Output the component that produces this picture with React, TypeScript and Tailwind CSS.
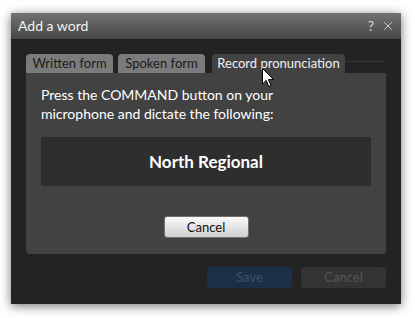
import { X } from 'lucide-react';

export default function App() {
  return (
    <div className="relative w-[415px] h-[318px] bg-white pt-[13px] pl-[11px] font-['Lato',sans-serif]">
      <div className="w-[390px] h-[291px] flex flex-col bg-[#232323] shadow-[0_2px_10px_rgba(0,0,0,0.55)]">
        {/* title bar */}
        <div className="h-[26px] flex items-center justify-between pl-[7px] pr-[6px] bg-gradient-to-b from-[#727272] to-[#474747]">
          <span className="text-[14px] text-[#f2f2f2] leading-none">Add a word</span>
          <div className="flex items-center gap-[7px] text-[#d8d8d8]">
            <span className="text-[14px] leading-none">?</span>
            <X className="w-[14px] h-[14px]" strokeWidth={1.5} />
          </div>
        </div>

        <div className="flex-1 flex flex-col px-[15px] pt-[15px]">
          {/* tabs */}
          <div className="h-[19px] flex items-end">
            <div className="w-[87px] h-[19px] rounded-t-[4px] bg-[#7b7b7b] text-[#1c1c1c] text-[13px] flex items-center justify-center leading-none">Written form</div>
            <div className="w-[5px]" />
            <div className="w-[87px] h-[19px] rounded-t-[4px] bg-[#7b7b7b] text-[#1c1c1c] text-[13px] flex items-center justify-center leading-none">Spoken form</div>
            <div className="w-[7px]" />
            <div className="w-[133px] h-[19px] rounded-t-[4px] bg-[#424242] text-[#f0f0f0] text-[13px] flex items-center justify-center leading-none">Record pronunciation</div>
            <div className="flex-1 h-[19px] flex items-center">
              <div className="w-full h-px mt-[-4px] bg-[#363636]" />
            </div>
          </div>

          {/* panel */}
          <div className="h-[181px] bg-[#424242] rounded-b-[4px] flex flex-col px-[15px] pt-[12px]">
            <p className="text-[14px] leading-[19px] text-white">
              Press the COMMAND button on your<br />microphone and dictate the following:
            </p>
            <div className="mt-[14px] h-[49px] bg-[#2e2e2e] flex items-center justify-center">
              <span className="text-[17px] font-bold text-white">North Regional</span>
            </div>
            <div className="mt-[30px] flex justify-center">
              <button className="w-[85px] h-[22px] rounded-[3px] border border-[#707070] bg-gradient-to-b from-[#fafafa] to-[#cfcfcf] text-[13px] text-[#111] leading-none">Cancel</button>
            </div>
          </div>

          {/* footer */}
          <div className="mt-[13px] flex justify-end gap-[9px]">
            <button className="w-[85px] h-[21px] rounded-[3px] bg-[#1b2f47] text-[13px] text-[#3e5270] leading-none">Save</button>
            <button className="w-[85px] h-[21px] rounded-[3px] bg-[#343434] text-[13px] text-[#555555] leading-none">Cancel</button>
          </div>
        </div>
      </div>

      {/* mouse cursor */}
      <svg className="absolute left-[262px] top-[68px]" width="13" height="20" viewBox="0 0 13 20">
        <path d="M0.5 0.5 L0.5 16 L4.2 12.4 L6.8 18.6 L9 17.6 L6.5 11.6 L11.5 11.6 Z" fill="white" stroke="black" strokeWidth="1" strokeLinejoin="round" />
      </svg>
    </div>
  );
}
